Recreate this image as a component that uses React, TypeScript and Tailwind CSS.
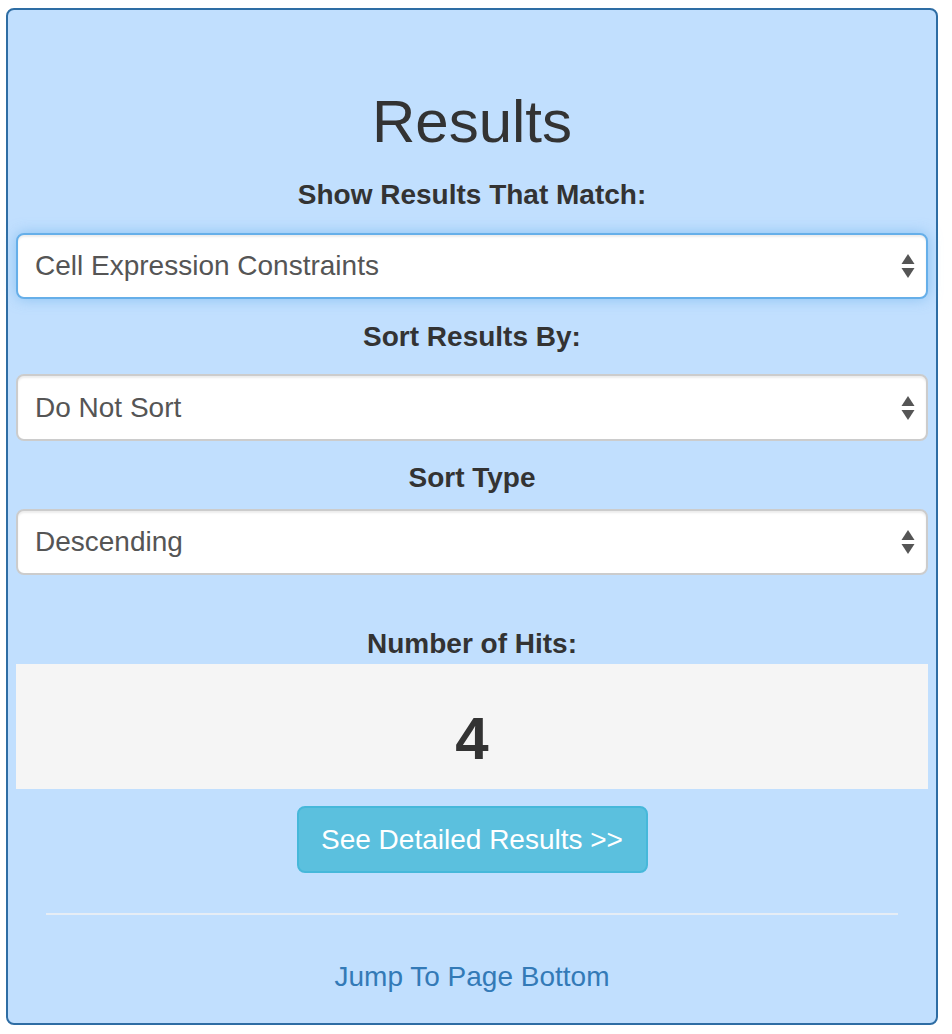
import { useState } from "react";

function Arrows() {
    return (
        <svg className="pointer-events-none absolute right-[13px] top-1/2 -translate-y-1/2" width="14" height="26" viewBox="0 0 14 26">
            <path d="M7 1 L13.5 11 H0.5 Z" fill="#555" />
            <path d="M0.5 15 H13.5 L7 25 Z" fill="#555" />
        </svg>
    );
}

function Picker({ value, options, focused, onChange, height }: {
    value: string;
    options: string[];
    focused?: boolean;
    onChange: (v: string) => void;
    height: string;
}) {
    return (
        <div className="relative">
            <select
                value={value}
                onChange={(e) => onChange(e.target.value)}
                className={`block w-full appearance-none rounded-[8px] border-2 bg-white pl-[17px] pr-12 text-[28px] text-[#555] outline-none ${height} ${focused
                        ? "border-[#66afe9] shadow-[inset_0_2px_2px_rgba(0,0,0,0.075),0_0_14px_rgba(102,175,233,0.6)]"
                        : "border-[#ccc] shadow-[inset_0_2px_2px_rgba(0,0,0,0.075)]"
                    }`}
            >
                {options.map((o) => (
                    <option key={o}>{o}</option>
                ))}
            </select>
            <Arrows />
        </div>
    );
}

export default function App() {
    const [match, setMatch] = useState("Cell Expression Constraints");
    const [sortBy, setSortBy] = useState("Do Not Sort");
    const [sortType, setSortType] = useState("Descending");
    const hits = 4;

    return (
        <div className="min-h-screen bg-white pl-[6px] pt-[8px] font-['Liberation_Sans',Arial,sans-serif] text-[#333]">
            <div className="h-[1017px] w-[932px] rounded-[8px] border-2 border-[#2e6da4] bg-[#c1dffe] px-[8px]">
                <h2 className="mt-[79px] text-center text-[60px] leading-[66px] font-normal">Results</h2>

                <div className="mt-[20px] text-center text-[28px] leading-[40px] font-bold">Show Results That Match:</div>
                <div className="mt-[18px]">
                    <Picker
                        value={match}
                        onChange={setMatch}
                        focused
                        height="h-[66px]"
                        options={["Cell Expression Constraints", "Gene Expression Constraints", "All Constraints"]}
                    />
                </div>

                <div className="mt-[18px] text-center text-[28px] leading-[40px] font-bold">Sort Results By:</div>
                <div className="mt-[17px]">
                    <Picker
                        value={sortBy}
                        onChange={setSortBy}
                        height="h-[67px]"
                        options={["Do Not Sort", "Cell Name", "Expression Level"]}
                    />
                </div>

                <div className="mt-[17px] text-center text-[28px] leading-[40px] font-bold">Sort Type</div>
                <div className="mt-[11px]">
                    <Picker
                        value={sortType}
                        onChange={setSortType}
                        height="h-[66px]"
                        options={["Descending", "Ascending"]}
                    />
                </div>

                <div className="mt-[49px] text-center text-[28px] leading-[40px] font-bold">Number of Hits:</div>
                <div className="flex h-[125px] items-center justify-center bg-[#f5f5f5] pt-[24px] text-[60px] font-bold leading-none">
                    {hits}
                </div>

                <div className="mt-[17px] flex justify-center">
                    <button className="h-[67px] w-[351px] rounded-[8px] border-2 border-[#46b8da] bg-[#5bc0de] text-[28px] text-white">
                        See Detailed Results &gt;&gt;
                    </button>
                </div>

                <div className="mx-[30px] mt-[40px] h-[2px] bg-[#e6edf5]" />

                <div className="mt-[42px] text-center text-[28px] leading-[40px]">
                    <a href="#bottom" className="text-[#337ab7]">Jump To Page Bottom</a>
                </div>
            </div>
        </div>
    );
}
